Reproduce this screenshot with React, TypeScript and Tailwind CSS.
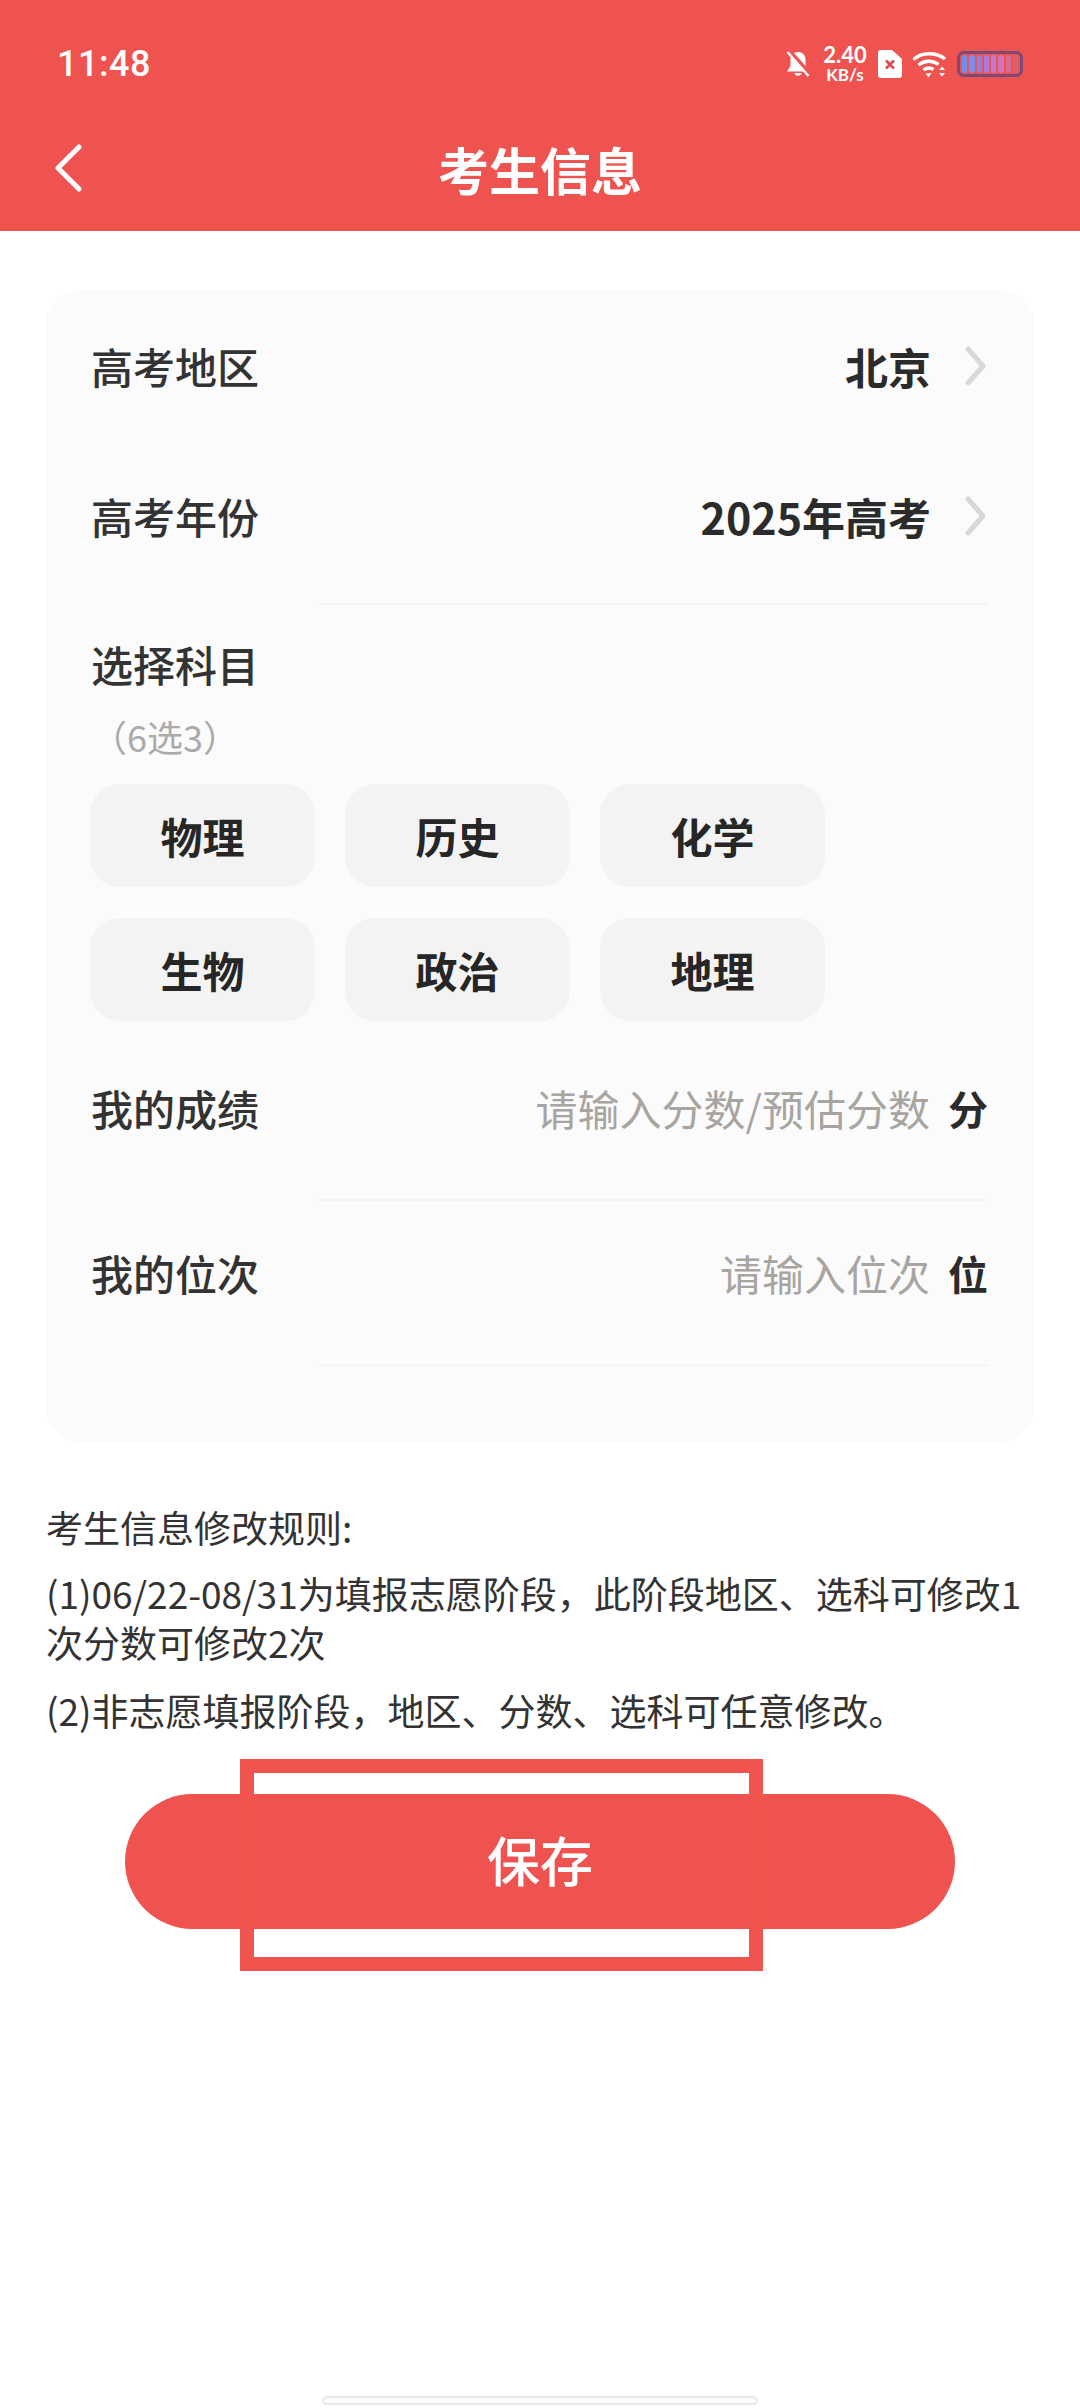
const CJK = "font-['Noto_Sans_CJK_SC','Noto_Sans',sans-serif]";

const SUBJECTS = ["物理", "历史", "化学", "生物", "政治", "地理"];
const BATTERY = ["#6f90f2", "#7a8cf0", "#8a82ea", "#a87ee0", "#c07ad2", "#cf74b8", "#d86a94", "#dc5f70"];

function BellOff() {
  return (
    <svg width="26" height="28" viewBox="0 0 26 28">
      <path d="M13 2c-4.800 0-7.500 3.500-7.500 8v6l-3.500 5.500h22l-3.500-5.500v-6C20.500 5.500 17.800 2 13 2z" fill="#fff" />
      <path d="M9.500 23a3.600 3.600 0 0 0 7 0z" fill="#fff" />
      <path d="M4 1l21 24" stroke="#ef5350" strokeWidth="5" />
      <path d="M2.500 2l21 24" stroke="#fff" strokeWidth="2.400" />
    </svg>
  );
}

function Sim() {
  return (
    <svg width="24" height="28" viewBox="0 0 24 28">
      <path d="M3 0h11l10 9v16a3 3 0 0 1-3 3H3a3 3 0 0 1-3-3V3a3 3 0 0 1 3-3z" fill="#fff" />
      <path d="M8 10.500l8 8M16 10.500l-8 8" stroke="#d94f50" strokeWidth="2.600" />
    </svg>
  );
}

function Wifi() {
  return (
    <svg width="36" height="28" viewBox="0 0 36 28" fill="none" stroke="#fff" strokeWidth="3.400">
      <path d="M1.500 9.500C10 2 24 2 33 9" />
      <path d="M6.500 15c6-5 14-5 20-.5" />
      <path d="M11.500 20c3.500-2.600 7-2.600 10-.5" />
      <path d="M13.500 23.500l3 4 3-4.500z" fill="#fff" stroke="none" />
      <path d="M27 20l3-3.600 3 3.600zM27 23l3 3.600 3-3.600z" fill="#fff" stroke="none" />
    </svg>
  );
}

function Battery() {
  return (
    <div className="flex h-[26px] w-[66px] items-center gap-[2px] rounded-[7px] border-[3px] border-[#7d4a78] px-[2px]">
      {BATTERY.map((c) => (
        <span key={c} className="h-[18px] flex-1 rounded-[3px]" style={{ backgroundColor: c }} />
      ))}
    </div>
  );
}

function StatusBar() {
  return (
    <div className="flex h-[128px] items-center justify-between pl-[57px] pr-[57px] text-white">
      <span className="font-['Roboto',sans-serif] text-[36px] font-medium leading-none tracking-[0.5px]">11:48</span>
      <div className="flex items-center">
        <BellOff />
        <div className="ml-[11px] flex w-[46px] flex-col items-center gap-[4px] font-['Lato',sans-serif] font-bold">
          <span className="text-[22px] leading-[18px]">2.40</span>
          <span className="text-[17px] leading-[14px]">KB/s</span>
        </div>
        <div className="ml-[10px]"><Sim /></div>
        <div className="ml-[10px]"><Wifi /></div>
        <div className="ml-[9px]"><Battery /></div>
      </div>
    </div>
  );
}

function SelectRow({ label, value }: { label: string; value: string }) {
  return (
    <div className="flex h-[150px] items-center justify-between">
      <span className="text-[42px] font-medium leading-none text-[#333]">{label}</span>
      <div className="flex items-center">
        <span className="text-[43px] font-bold leading-none text-[#2b2b2b]">{value}</span>
        <svg width="24" height="40" viewBox="0 0 24 40" fill="none" className="ml-[33px]">
          <path d="M4 3l15 17L4 37" stroke="#d8d8d8" strokeWidth="5" strokeLinecap="round" strokeLinejoin="round" />
        </svg>
      </div>
    </div>
  );
}

function InputRow({ label, hint, unit }: { label: string; hint: string; unit: string }) {
  return (
    <>
      <div className="flex h-[163px] items-center justify-between pb-[19px]">
        <span className="text-[42px] font-medium leading-none text-[#333]">{label}</span>
        <div className="flex items-center">
          <span className="text-[42px] leading-none text-[#a8a5a1]">{hint}</span>
          <span className="ml-[18px] text-[40px] font-bold leading-none text-[#2b2b2b]">{unit}</span>
        </div>
      </div>
      <div className="ml-[228px] h-[2px] bg-[#f4f4f4]" />
    </>
  );
}

export default function App() {
  return (
    <div className={`relative flex h-[2408px] w-[1080px] flex-col overflow-hidden bg-white ${CJK}`}>
      <header className="h-[231px] shrink-0 bg-[#ef5350]">
        <StatusBar />
        <div className="relative flex h-[82px] items-center justify-center">
          <svg width="32" height="48" viewBox="0 0 32 48" fill="none" className="absolute left-[51px] top-[16px]">
            <path d="M28 3L7 24l21 21" stroke="#fff" strokeWidth="5" strokeLinecap="round" strokeLinejoin="round" />
          </svg>
          <h1 className="text-[51px] font-bold leading-none text-white">考生信息</h1>
        </div>
      </header>

      <section className="mx-[45px] mt-[59px] h-[1152px] shrink-0 rounded-[36px] bg-[#fbfbfb] pl-[46px] pr-[47px] pt-[1px]">
        <SelectRow label="高考地区" value="北京" />
        <SelectRow label="高考年份" value="2025年高考" />
        <div className="ml-[228px] mt-[12px] h-[2px] bg-[#f4f4f4]" />

        <p className="mt-[36px] text-[42px] font-medium leading-[46px] text-[#333]">选择科目</p>
        <p className="mt-[25px] text-[36px] leading-[48px] text-[#aaa]">（6选3）</p>

        <div className="-ml-[1px] mt-[24px] grid w-[735px] grid-cols-3 gap-x-[30px] gap-y-[31px]">
          {SUBJECTS.map((s) => (
            <div key={s} className="flex h-[103px] items-center justify-center rounded-[30px] bg-[#f3f3f3] text-[42px] font-bold leading-none text-[#262626]">
              {s}
            </div>
          ))}
        </div>

        <div className="mt-[15px]">
          <InputRow label="我的成绩" hint="请输入分数/预估分数" unit="分" />
          <InputRow label="我的位次" hint="请输入位次" unit="位" />
        </div>
      </section>

      <section className="mx-[46px] mt-[61px] text-[37px] leading-[49px] text-[#333]">
        <p>考生信息修改规则:</p>
        <p className="mt-[17px]">(1)06/22-08/31为填报志愿阶段，此阶段地区、选科可修改1次分数可修改2次</p>
        <p className="mt-[19px]">(2)非志愿填报阶段，地区、分数、选科可任意修改。</p>
      </section>

      <div className="relative mx-[125px] mt-[59px] flex h-[135px] items-center justify-center rounded-full bg-[#ef5350]">
        <span className="mb-[4px] text-[53px] font-medium leading-none text-white">保存</span>
        <div className="absolute left-[115px] top-[-35px] h-[212px] w-[523px] border-[14px] border-[#f0544f]" />
      </div>

      <div className="absolute bottom-[3px] left-[322px] h-[9px] w-[436px] rounded-full border-2 border-[#e8e8e8] bg-[#fcfcfc]" />
    </div>
  );
}
